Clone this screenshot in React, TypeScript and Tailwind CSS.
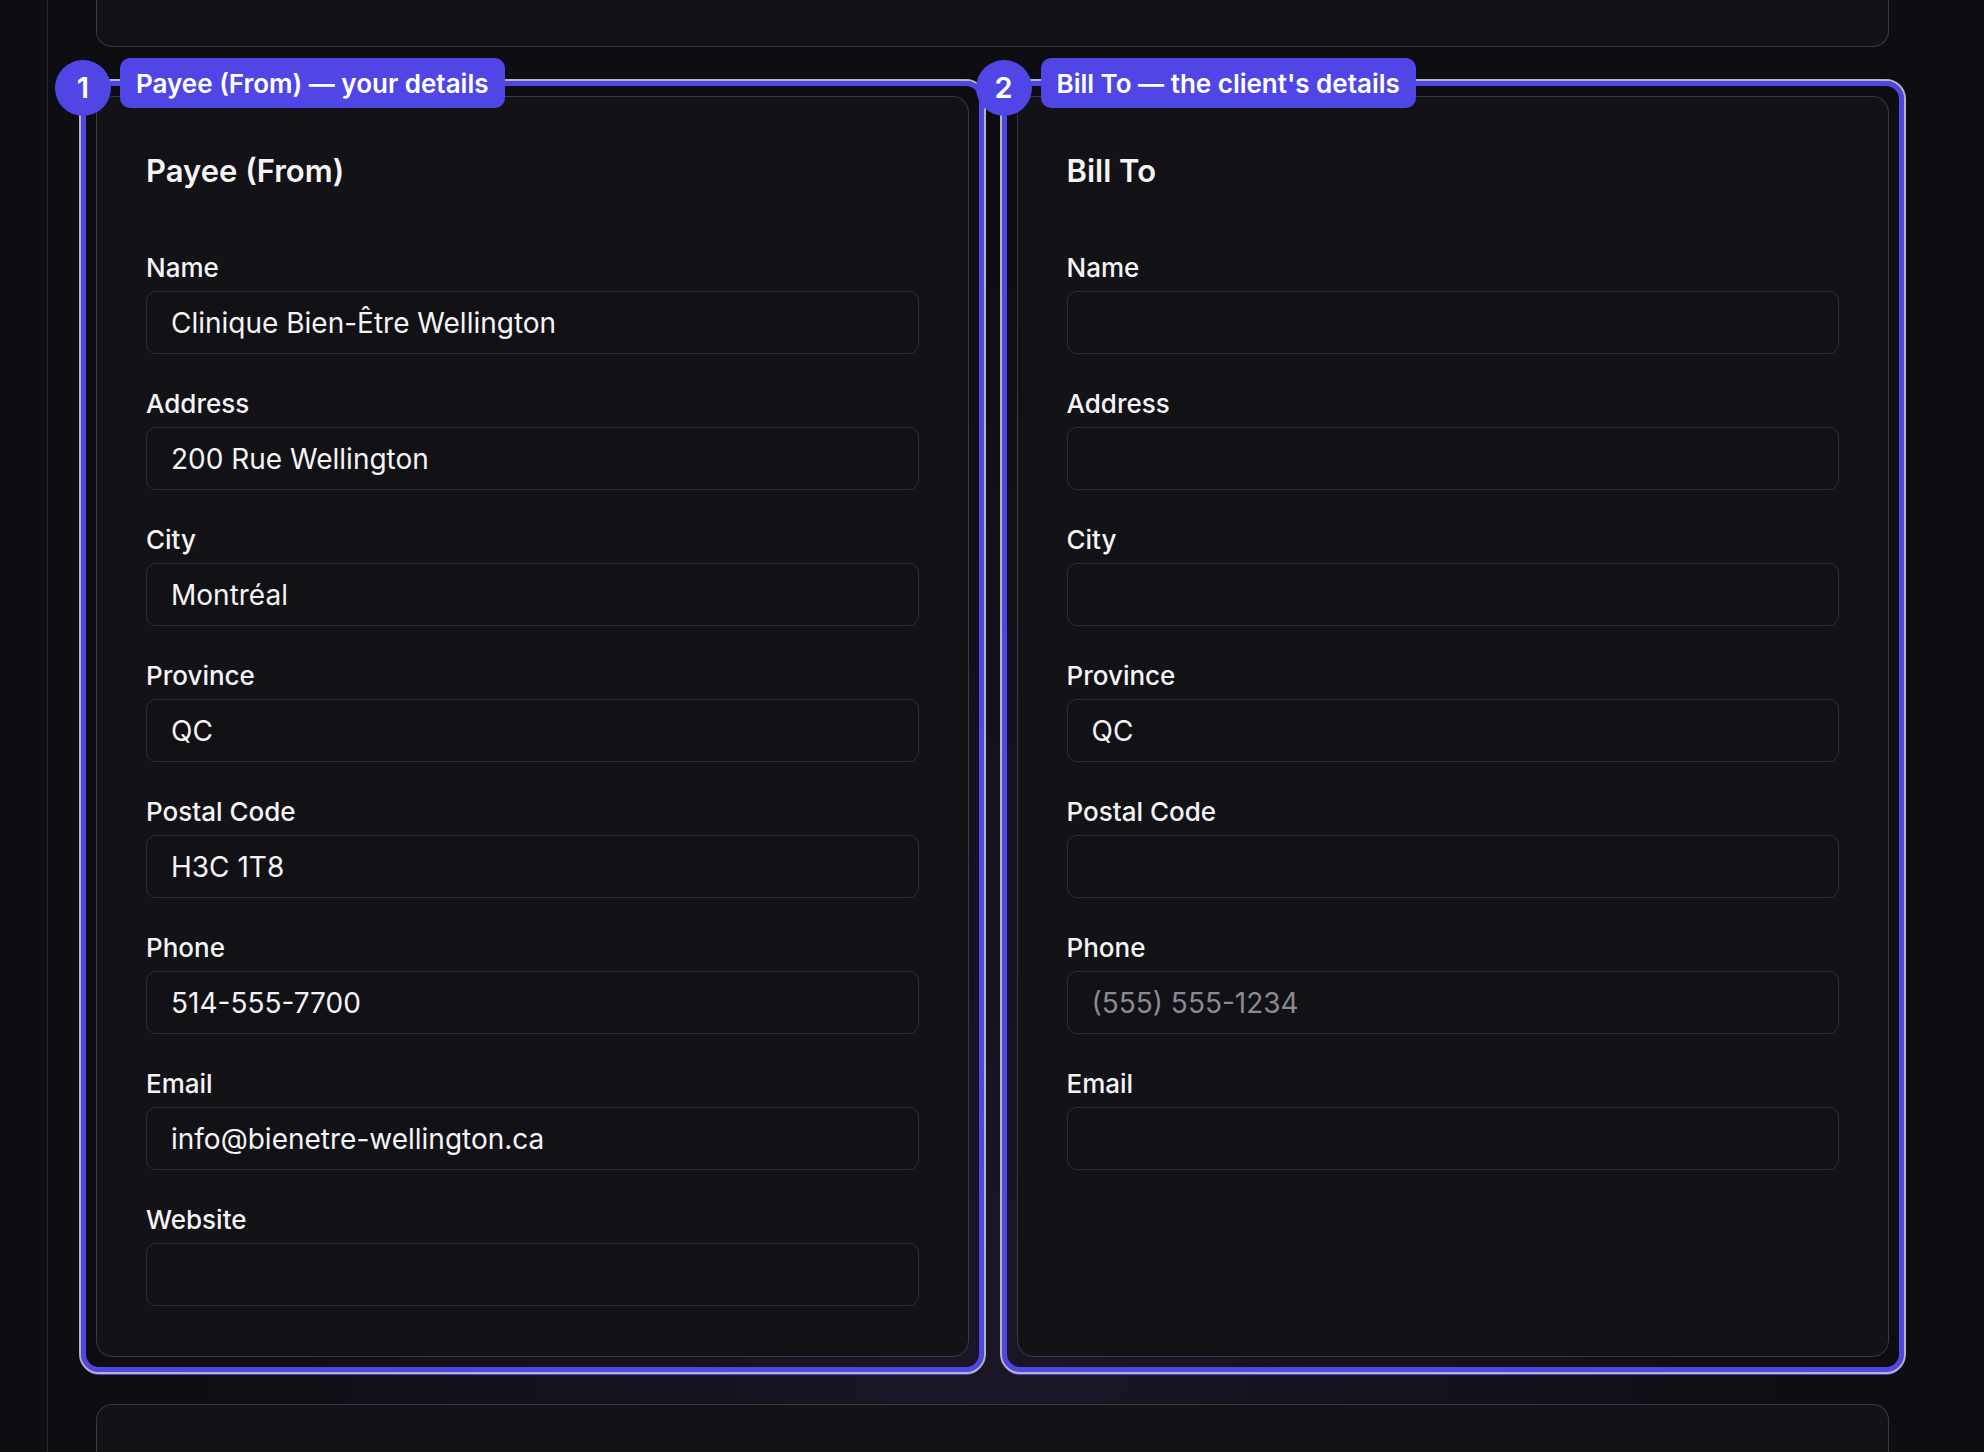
const payee = [
  { label: "Name", value: "Clinique Bien-Être Wellington" },
  { label: "Address", value: "200 Rue Wellington" },
  { label: "City", value: "Montréal" },
  { label: "Province", value: "QC" },
  { label: "Postal Code", value: "H3C 1T8" },
  { label: "Phone", value: "514-555-7700" },
  { label: "Email", value: "info@bienetre-wellington.ca" },
  { label: "Website", value: "" },
];

const billTo = [
  { label: "Name", value: "" },
  { label: "Address", value: "" },
  { label: "City", value: "" },
  { label: "Province", value: "QC" },
  { label: "Postal Code", value: "" },
  { label: "Phone", value: "", placeholder: "(555) 555-1234" },
  { label: "Email", value: "" },
];

type Field = { label: string; value: string; placeholder?: string };

const Panel = ({ step, tag, title, fields }: { step: string; tag: string; title: string; fields: Field[] }) => (
  <div className="relative rounded-[18px] border-[5px] border-[#4f46e5] outline-2 outline-[#b4b4bc] p-[10px] shadow-[0_3px_0_#4f46e5]">
    <div className="absolute -left-[31px] -top-[26px] w-[56px] h-[56px] rounded-full bg-[#4f46e5] flex items-center justify-center text-white text-[29px] font-semibold">
      {step}
    </div>
    <div className="absolute left-[34px] -top-[28px] h-[50px] px-4 rounded-[10px] bg-[#4f46e5] flex items-center text-white text-[26px] font-semibold">
      {tag}
    </div>
    <div className="h-full rounded-[16px] border border-[#3b3a41] bg-[#131217] px-[49px] pt-[58px] pb-[50px]">
      <h2 className="text-[31px] leading-[32px] font-semibold text-[#f4f4f5] mb-[66px]">{title}</h2>
      <div className="flex flex-col gap-[35px]">
        {fields.map((f) => (
          <div key={f.label}>
            <div className="text-[26px] leading-[30px] font-medium text-[#f4f4f5] mb-2">{f.label}</div>
            <input
              readOnly
              value={f.value}
              placeholder={f.placeholder}
              className="w-full h-[63px] rounded-[10px] border border-[#2f2e35] bg-[#121116] px-6 text-[28px] text-[#f4f4f5] placeholder:text-[#8b8a92] outline-none"
            />
          </div>
        ))}
      </div>
    </div>
  </div>
);

export default function App() {
  return (
    <div
      className="min-h-screen bg-[#0e0d12] flex"
      style={{ fontFamily: "Inter, 'Noto Sans', sans-serif", backgroundImage: "radial-gradient(ellipse at 50% 95%, #1a1628 0%, #0e0d12 60%)" }}
    >
      <div className="ml-[47px] border-l border-[#25242a] flex-1 h-[1452px] overflow-hidden">
        <div className="pl-[33px] w-[1856px]">
          <div className="mx-[15px] h-[47px] rounded-b-2xl border-x border-b border-[#3b3a41] bg-[#131217]" />
          <div className="mt-[34px] grid grid-cols-2 gap-[18px]">
            <Panel step="1" tag="Payee (From) — your details" title="Payee (From)" fields={payee} />
            <Panel step="2" tag="Bill To — the client's details" title="Bill To" fields={billTo} />
          </div>
          <div className="mt-[32px] mx-[15px] h-[120px] rounded-t-2xl border-x border-t border-[#3b3a41] bg-[#131217]" />
        </div>
      </div>
    </div>
  );
}
